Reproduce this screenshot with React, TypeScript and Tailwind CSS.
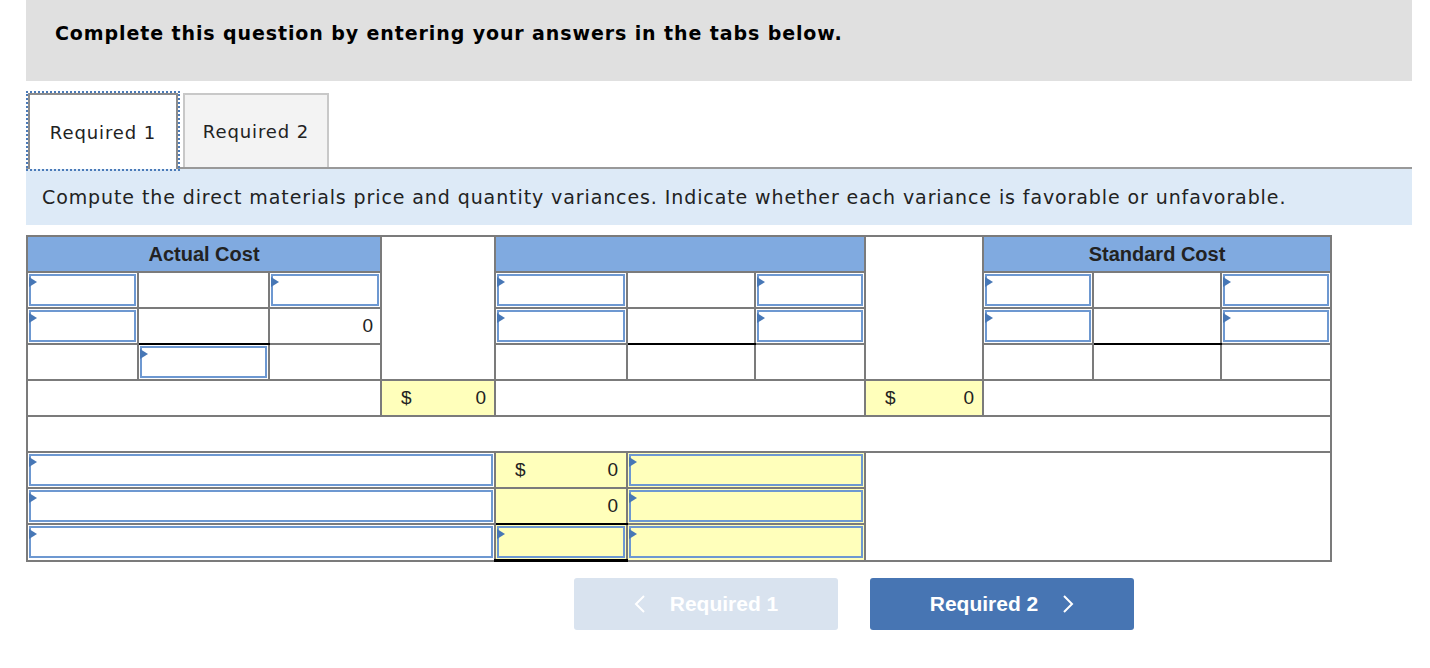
import React from 'react';

const verdana = { fontFamily: '"DejaVu Sans", Verdana, sans-serif' };
const arial = { fontFamily: '"Liberation Sans", Arial, sans-serif' };

const Input = ({ yellow = false }: { yellow?: boolean }) => (
    <div className={`relative h-[32px] border-2 border-[#6d98d1] ${yellow ? 'bg-[#ffffbb]' : 'bg-white'}`}>
        <span className="absolute -left-[2px] top-[1px] h-0 w-0 border-y-[5px] border-l-[8px] border-y-transparent border-l-[#4777b6]" />
    </div>
);

const cell = 'border-2 border-[#7b7b7b] p-px h-[36px] align-middle';
const blk = 'border-b-black';

const Money = ({ dollar = false }: { dollar?: boolean }) => (
    <div className="flex items-center justify-between pl-[18px] pr-[7px] text-[19px] text-[#222]">
        <span>{dollar ? '$' : ''}</span>
        <span>0</span>
    </div>
);

const App = () => {
    return (
        <div className="ml-[26px] w-[1386px] bg-white pb-10">
            <div className="h-[81px] bg-[#e0e0e0] px-[29px] pt-[19px]">
                <h1 style={verdana} className="text-[19px] font-bold tracking-[0.9px] text-black">
                    Complete this question by entering your answers in the tabs below.
                </h1>
            </div>

            <div className="mt-[12px] flex items-end border-b-2 border-[#999]" style={verdana}>
                <div className="relative z-10 -mb-[2px] ml-[2px] flex h-[76px] w-[150px] items-center justify-center border-2 border-b-0 border-[#8c8c8c] bg-white text-[18px] tracking-[0.9px] text-[#222] outline-2 outline-dotted outline-[#4a7ab8]">
                    Required 1
                </div>
                <div className="ml-[5px] flex h-[74px] w-[146px] items-center justify-center border-2 border-b-0 border-[#c8c8c8] bg-[#f3f3f3] text-[18px] tracking-[0.9px] text-[#222]">
                    Required 2
                </div>
            </div>

            <div className="flex h-[56px] items-center bg-[#ddeaf7] px-[16px]" style={verdana}>
                <p className="text-[19px] tracking-[0.9px] text-[#222]">
                    Compute the direct materials price and quantity variances. Indicate whether each variance is
                    favorable or unfavorable.
                </p>
            </div>

            <table style={arial} className="mt-[10px] w-[1306px] table-fixed border-collapse border-2 border-[#7b7b7b]">
                <colgroup>
                    <col className="w-[111px]" />
                    <col className="w-[131px]" />
                    <col className="w-[112px]" />
                    <col className="w-[114px]" />
                    <col className="w-[132px]" />
                    <col className="w-[128px]" />
                    <col className="w-[110px]" />
                    <col className="w-[118px]" />
                    <col className="w-[110px]" />
                    <col className="w-[128px]" />
                    <col className="w-[110px]" />
                </colgroup>
                <tbody>
                    <tr>
                        <td colSpan={3} className={`${cell} bg-[#80aae0] text-center text-[20px] font-bold text-[#222]`}>
                            Actual Cost
                        </td>
                        <td rowSpan={4} className={`${cell} bg-white`} />
                        <td colSpan={3} className={`${cell} bg-[#80aae0]`} />
                        <td rowSpan={4} className={`${cell} bg-white`} />
                        <td colSpan={3} className={`${cell} bg-[#80aae0] text-center text-[20px] font-bold text-[#222]`}>
                            Standard Cost
                        </td>
                    </tr>
                    <tr>
                        <td className={cell}><Input /></td>
                        <td className={cell} />
                        <td className={cell}><Input /></td>
                        <td className={cell}><Input /></td>
                        <td className={cell} />
                        <td className={cell}><Input /></td>
                        <td className={cell}><Input /></td>
                        <td className={cell} />
                        <td className={cell}><Input /></td>
                    </tr>
                    <tr>
                        <td className={cell}><Input /></td>
                        <td className={`${cell} ${blk}`} />
                        <td className={`${cell} pr-[7px] text-right text-[19px] text-[#222]`}>0</td>
                        <td className={cell}><Input /></td>
                        <td className={`${cell} ${blk}`} />
                        <td className={cell}><Input /></td>
                        <td className={cell}><Input /></td>
                        <td className={`${cell} ${blk}`} />
                        <td className={cell}><Input /></td>
                    </tr>
                    <tr>
                        <td className={cell} />
                        <td className={cell}><Input /></td>
                        <td className={cell} />
                        <td className={cell} />
                        <td className={cell} />
                        <td className={cell} />
                        <td className={cell} />
                        <td className={cell} />
                        <td className={cell} />
                    </tr>
                    <tr>
                        <td colSpan={3} className={cell} />
                        <td className={`${cell} bg-[#ffffbb]`}><Money dollar /></td>
                        <td colSpan={3} className={cell} />
                        <td className={`${cell} bg-[#ffffbb]`}><Money dollar /></td>
                        <td colSpan={3} className={cell} />
                    </tr>
                    <tr>
                        <td colSpan={11} className={cell} />
                    </tr>
                    <tr>
                        <td colSpan={4} className={cell}><Input /></td>
                        <td className={`${cell} bg-[#ffffbb]`}><Money dollar /></td>
                        <td colSpan={2} className={`${cell} bg-[#ffffbb]`}><Input yellow /></td>
                        <td colSpan={4} rowSpan={3} className={cell} />
                    </tr>
                    <tr>
                        <td colSpan={4} className={cell}><Input /></td>
                        <td className={`${cell} ${blk} bg-[#ffffbb]`}><Money /></td>
                        <td colSpan={2} className={`${cell} bg-[#ffffbb]`}><Input yellow /></td>
                    </tr>
                    <tr>
                        <td colSpan={4} className={cell}><Input /></td>
                        <td className={`${cell} border-b-[3px] ${blk} bg-[#ffffbb]`}><Input yellow /></td>
                        <td colSpan={2} className={`${cell} bg-[#ffffbb]`}><Input yellow /></td>
                    </tr>
                </tbody>
            </table>

            <div className="ml-[548px] mt-[16px] flex gap-[32px]" style={arial}>
                <button className="flex h-[52px] w-[264px] items-center justify-center gap-[24px] rounded-[3px] bg-[#d9e3ef] text-[21px] font-bold text-white">
                    <svg width="12" height="18" viewBox="0 0 12 18" fill="none" stroke="currentColor" strokeWidth="2">
                        <polyline points="10,1 2,9 10,17" />
                    </svg>
                    <span>Required 1</span>
                </button>
                <button className="flex h-[52px] w-[264px] items-center justify-center gap-[24px] rounded-[3px] bg-[#4775b3] text-[21px] font-bold text-white">
                    <span>Required 2</span>
                    <svg width="12" height="18" viewBox="0 0 12 18" fill="none" stroke="currentColor" strokeWidth="2">
                        <polyline points="2,1 10,9 2,17" />
                    </svg>
                </button>
            </div>
        </div>
    );
};

export default App;
